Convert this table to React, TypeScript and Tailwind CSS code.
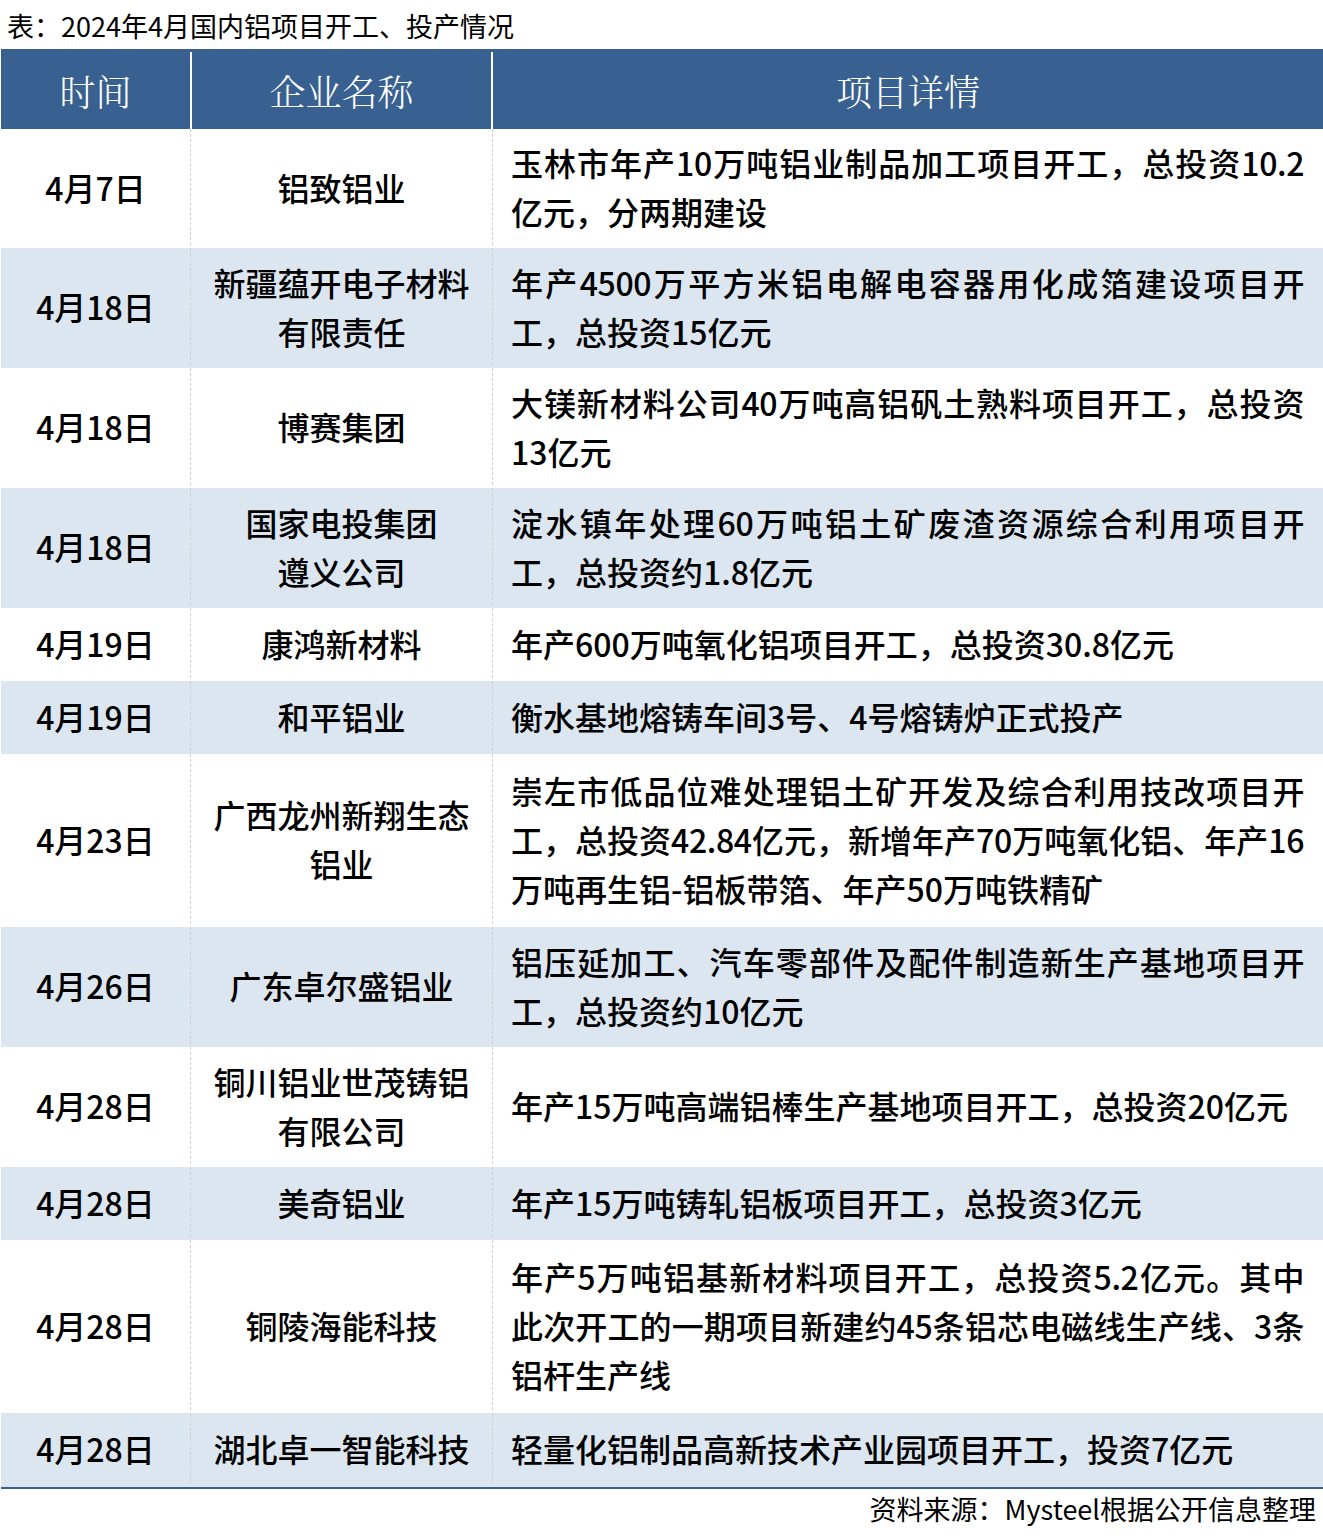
type Row = {
  date: string;
  company: string[];
  detail: string[];
  h: string;
  alt: boolean;
};

const rows: Row[] = [
  {
    date: "4月7日",
    company: ["铝致铝业"],
    detail: ["玉林市年产10万吨铝业制品加工项目开工，总投资10.2", "亿元，分两期建设"],
    h: "h-[119px]",
    alt: false,
  },
  {
    date: "4月18日",
    company: ["新疆蕴开电子材料", "有限责任"],
    detail: ["年产4500万平方米铝电解电容器用化成箔建设项目开", "工，总投资15亿元"],
    h: "h-[120px]",
    alt: true,
  },
  {
    date: "4月18日",
    company: ["博赛集团"],
    detail: ["大镁新材料公司40万吨高铝矾土熟料项目开工，总投资", "13亿元"],
    h: "h-[120px]",
    alt: false,
  },
  {
    date: "4月18日",
    company: ["国家电投集团", "遵义公司"],
    detail: ["淀水镇年处理60万吨铝土矿废渣资源综合利用项目开", "工，总投资约1.8亿元"],
    h: "h-[120px]",
    alt: true,
  },
  {
    date: "4月19日",
    company: ["康鸿新材料"],
    detail: ["年产600万吨氧化铝项目开工，总投资30.8亿元"],
    h: "h-[73px]",
    alt: false,
  },
  {
    date: "4月19日",
    company: ["和平铝业"],
    detail: ["衡水基地熔铸车间3号、4号熔铸炉正式投产"],
    h: "h-[73px]",
    alt: true,
  },
  {
    date: "4月23日",
    company: ["广西龙州新翔生态", "铝业"],
    detail: [
      "崇左市低品位难处理铝土矿开发及综合利用技改项目开",
      "工，总投资42.84亿元，新增年产70万吨氧化铝、年产16",
      "万吨再生铝-铝板带箔、年产50万吨铁精矿",
    ],
    h: "h-[173px]",
    alt: false,
  },
  {
    date: "4月26日",
    company: ["广东卓尔盛铝业"],
    detail: ["铝压延加工、汽车零部件及配件制造新生产基地项目开", "工，总投资约10亿元"],
    h: "h-[120px]",
    alt: true,
  },
  {
    date: "4月28日",
    company: ["铜川铝业世茂铸铝", "有限公司"],
    detail: ["年产15万吨高端铝棒生产基地项目开工，总投资20亿元"],
    h: "h-[120px]",
    alt: false,
  },
  {
    date: "4月28日",
    company: ["美奇铝业"],
    detail: ["年产15万吨铸轧铝板项目开工，总投资3亿元"],
    h: "h-[73px]",
    alt: true,
  },
  {
    date: "4月28日",
    company: ["铜陵海能科技"],
    detail: [
      "年产5万吨铝基新材料项目开工，总投资5.2亿元。其中",
      "此次开工的一期项目新建约45条铝芯电磁线生产线、3条",
      "铝杆生产线",
    ],
    h: "h-[173px]",
    alt: false,
  },
  {
    date: "4月28日",
    company: ["湖北卓一智能科技"],
    detail: ["轻量化铝制品高新技术产业园项目开工，投资7亿元"],
    h: "h-[74px]",
    alt: true,
  },
];

export default function App() {
  return (
    <div className="w-[1323px] bg-white text-black font-['Noto_Sans_CJK_SC',sans-serif]">
      <div className="h-[49px] pl-[7px] pt-[8px] text-[27px] leading-[36px]">
        表：2024年4月国内铝项目开工、投产情况
      </div>

      {/* header */}
      <div className="ml-px grid h-[80px] grid-cols-[189px_301px_1fr] bg-[#386090] pt-[3px] text-[36px] font-light text-white font-['Noto_Serif_CJK_SC','Noto_Sans_CJK_SC',serif]">
        <div className="flex items-center justify-center">时间</div>
        <div className="flex items-center justify-center border-l-2 border-white">企业名称</div>
        <div className="flex items-center justify-center border-l-2 border-white">项目详情</div>
      </div>

      {/* body */}
      <div className="ml-px border-b-2 border-[#386090]">
        {rows.map((r, i) => (
          <div
            key={i}
            className={`grid grid-cols-[189px_302px_1fr] pb-[3px] text-[32px] font-medium leading-[49px] ${r.h} ${
              r.alt ? "bg-[#dce6f0]" : "bg-white"
            }`}
          >
            <div className="flex items-center justify-center">{r.date}</div>
            <div className="flex flex-col items-center justify-center border-l border-dashed border-[#cfcfcf]">
              {r.company.map((c, j) => (
                <div key={j}>{c}</div>
              ))}
            </div>
            <div className="flex flex-col justify-center border-l border-dashed border-[#cfcfcf] pl-[18px] pr-[19px]">
              {r.detail.map((d, j) => (
                <div
                  key={j}
                  className={
                    j < r.detail.length - 1
                      ? "whitespace-nowrap tracking-[-0.4px] text-justify [text-align-last:justify]"
                      : "whitespace-nowrap"
                  }
                >
                  {d}
                </div>
              ))}
            </div>
          </div>
        ))}
      </div>

      <div className="flex h-[40px] items-center justify-end pr-[7px] text-[27px]">
        资料来源：Mysteel根据公开信息整理
      </div>
    </div>
  );
}
